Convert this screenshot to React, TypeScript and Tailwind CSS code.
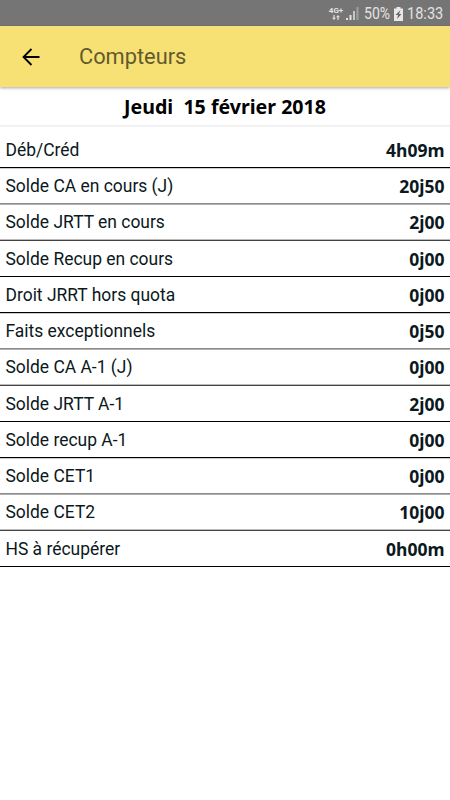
import React from 'react';

interface Counter {
  label: string;
  value: string;
}

const counters: Counter[] = [
  { label: 'Déb/Créd', value: '4h09m' },
  { label: 'Solde CA en cours (J)', value: '20j50' },
  { label: 'Solde JRTT en cours', value: '2j00' },
  { label: 'Solde Recup en cours', value: '0j00' },
  { label: 'Droit JRRT hors quota', value: '0j00' },
  { label: 'Faits exceptionnels', value: '0j50' },
  { label: 'Solde CA A-1 (J)', value: '0j00' },
  { label: 'Solde JRTT A-1', value: '2j00' },
  { label: 'Solde recup A-1', value: '0j00' },
  { label: 'Solde CET1', value: '0j00' },
  { label: 'Solde CET2', value: '10j00' },
  { label: 'HS à récupérer', value: '0h00m' },
];

function StatusBar() {
  return (
    <div className="flex h-[26px] items-center justify-end bg-[#757575] pt-px pr-[7px] font-[Roboto,sans-serif] text-base leading-none text-[#e2e2e2]">
      <div className="flex h-[14px] w-[14px] flex-col items-center">
        <span className="text-[8px] leading-[8px] font-bold">4G+</span>
        <svg className="h-[5px] w-[8px] shrink-0" viewBox="0 0 8 5" fill="currentColor">
          <path d="M2 5 0 2.8h1.4V0h1.2v2.8H4zM6 0l2 2.2H6.6V5H5.4V2.2H4z" />
        </svg>
      </div>
      <svg className="ml-[3px] h-[13px] w-[13px]" viewBox="0 0 13 13" fill="currentColor">
        <path d="M0 11h2v2H0zM3.5 8h2v5h-2z" />
        <path d="M7 4h2v9H7z" opacity=".75" />
        <path d="M10.5 0h2v13h-2z" opacity=".4" />
      </svg>
      <span className="ml-[5px] w-[26px] origin-left scale-x-[0.88]">50%</span>
      <svg className="ml-[4px] h-[14px] w-[9px]" viewBox="0 0 9 14">
        <path d="M2.5 0h4v1.5H9V14H0V1.5h2.5z" fill="#e8e8e8" />
        <path d="M6.5 3 1.5 8h2.6L3 12l4.5-5H5z" fill="#666" />
      </svg>
      <span className="ml-[4px] w-[36px] origin-left scale-x-[0.91]">18:33</span>
    </div>
  );
}

function Header() {
  return (
    <header className="relative flex h-[61px] items-center bg-[#f7e174] shadow-[0_1px_3px_rgba(0,0,0,0.35)]">
      <svg className="ml-[22px] h-[18px] w-[18px]" viewBox="0 0 18 18" fill="none" stroke="#000" strokeWidth="1.8">
        <path d="M17.5 9H1.5M9.5 1 1.5 9l8 8" />
      </svg>
      <h1 className="ml-[39px] pt-[2px] font-[Roboto,sans-serif] text-[21.8px] text-[#625a2e]">Compteurs</h1>
    </header>
  );
}

function CounterRow({ label, value }: Counter) {
  return (
    <li className="flex h-[36px] items-center justify-between border-b border-black px-[5.5px] pt-[2px] text-[#0b1820] nth-[4n+1]:shadow-[0_1px_0_#cccccc] nth-[4n+2]:border-[#8c8c8c] nth-[4n+2]:shadow-[0_1px_0_#b0b0b0] nth-[4n+3]:h-[37px] nth-[4n+3]:border-[#444444] nth-[4n+3]:pt-px nth-[4n+3]:shadow-[inset_0_-1px_0_#bbbbbb] last:shadow-none">
      <span className="font-[Roboto,sans-serif] text-[17.45px]">{label}</span>
      <span className="font-['Noto_Sans',sans-serif] text-[17.5px] font-bold">{value}</span>
    </li>
  );
}

export default function App() {
  return (
    <div className="h-[800px] w-[450px] overflow-hidden bg-white">
      <StatusBar />
      <Header />
      <h2 className="h-[40px] border-b-2 border-[#f2f2f2] text-center font-['Noto_Sans',sans-serif] text-[19.6px] leading-[40px] font-bold whitespace-pre text-black">
        Jeudi  15 février 2018
      </h2>
      <ul className="pt-[5px]">
        {counters.map((counter) => (
          <CounterRow key={counter.label} {...counter} />
        ))}
      </ul>
    </div>
  );
}
